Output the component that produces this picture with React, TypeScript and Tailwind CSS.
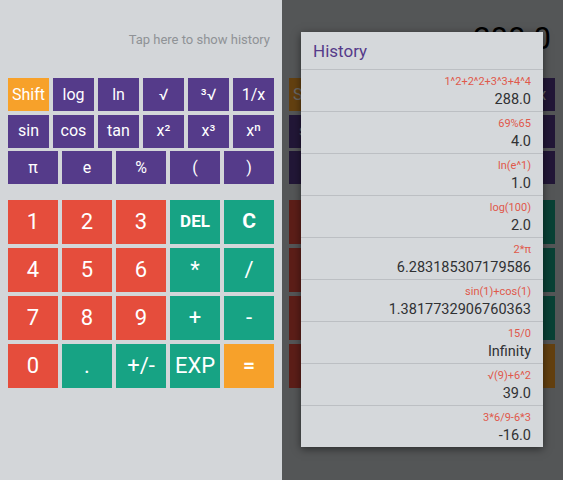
import React from "react";

const sciRow1 = ["Shift", "log", "ln", "√", "³√", "1/x"];
const sciRow2 = ["sin", "cos", "tan", "x²", "x³", "xⁿ"];
const sciRow3 = ["π", "e", "%", "(", ")"];

type K = { l: string; c: "r" | "g" | "o"; b?: "del" | "c" | "eq" };
const numKeys: K[] = [
  { l: "1", c: "r" }, { l: "2", c: "r" }, { l: "3", c: "r" }, { l: "DEL", c: "g", b: "del" }, { l: "C", c: "g", b: "c" },
  { l: "4", c: "r" }, { l: "5", c: "r" }, { l: "6", c: "r" }, { l: "*", c: "g" }, { l: "/", c: "g" },
  { l: "7", c: "r" }, { l: "8", c: "r" }, { l: "9", c: "r" }, { l: "+", c: "g" }, { l: "-", c: "g" },
  { l: "0", c: "r" }, { l: ".", c: "g" }, { l: "+/-", c: "g" }, { l: "EXP", c: "g" }, { l: "=", c: "o", b: "eq" },
];

const history = [
  ["1^2+2^2+3^3+4^4", "288.0"],
  ["69%65", "4.0"],
  ["ln(e^1)", "1.0"],
  ["log(100)", "2.0"],
  ["2*π", "6.283185307179586"],
  ["sin(1)+cos(1)", "1.3817732906760363"],
  ["15/0", "Infinity"],
  ["√(9)+6^2", "39.0"],
  ["3*6/9-6*3", "-16.0"],
];

function Calc({ display }: { display?: string }) {
  return (
    <div className="flex flex-col h-full">
      {display ? (
        <div className="h-[78px] flex justify-end pr-[4px] pt-[20px]">
          <span className="text-[31px] leading-[38px] text-black">{display}</span>
        </div>
      ) : (
        <div className="h-[78px] flex justify-end pr-[4px] pt-[31px]">
          <span className="text-[13px] leading-[18px] text-[#8f9296]">Tap here to show history</span>
        </div>
      )}
      <div className="flex flex-col gap-[3.5px]">
        <div className="grid grid-cols-6 gap-x-[4px]">
          {sciRow1.map((k) => (
            <div
              key={k}
              className={`h-[33px] flex items-center justify-center text-white text-[16px] ${k === "Shift" ? "bg-[#f7a12a]" : "bg-[#553b8a]"}`}
            >
              {k}
            </div>
          ))}
        </div>
        <div className="grid grid-cols-6 gap-x-[4px]">
          {sciRow2.map((k) => (
            <div key={k} className="h-[33px] flex items-center justify-center text-white text-[16px] bg-[#553b8a]">
              {k}
            </div>
          ))}
        </div>
        <div className="grid grid-cols-5 gap-x-[4px]">
          {sciRow3.map((k) => (
            <div key={k} className="h-[33px] flex items-center justify-center text-white text-[16px] bg-[#553b8a]">
              {k}
            </div>
          ))}
        </div>
      </div>
      <div className="grid grid-cols-5 gap-x-[4px] gap-y-[3.5px] mt-[15.5px]">
        {numKeys.map((k) => (
          <div
            key={k.l}
            className={`h-[44.5px] flex items-center justify-center text-white ${
              k.c === "r" ? "bg-[#e54d3c]" : k.c === "g" ? "bg-[#17a384]" : "bg-[#f7a12a]"
            } ${k.b === "del" ? "text-[17px] font-bold" : k.b === "c" || k.b === "eq" ? "text-[21px] font-bold" : "text-[22px]"}`}
          >
            {k.l}
          </div>
        ))}
      </div>
    </div>
  );
}

export default function App() {
  return (
    <div
      className="w-[563px] h-[480px] flex bg-[#d3d6d9] overflow-hidden"
      style={{ fontFamily: "Roboto, 'Noto Sans', sans-serif" }}
    >
      <div className="w-[282px] h-full pl-[8px] pr-[8px]">
        <Calc />
      </div>
      <div className="relative w-[281px] h-full pl-[7px] pr-[8px]">
        <Calc display="288.0" />
        <div className="absolute inset-0 bg-black/60" />
        <div className="absolute left-[19px] top-[32px] w-[242px] bg-[#d5d8db] shadow-[0_2px_8px_rgba(0,0,0,0.5)]">
          <div className="h-[37px] flex items-center pl-[12px]">
            <span className="text-[17px] text-[#553b8a] leading-[20px]">History</span>
          </div>
          {history.map(([e, r]) => (
            <div key={e} className="h-[42px] border-t border-[#bcbfc3] flex flex-col items-end pr-[12px] pt-[5px]">
              <span className="text-[11px] leading-[14px] text-[#e0594b]">{e}</span>
              <span className="text-[14.5px] leading-[18px] mt-[2px] text-[#303133]">{r}</span>
            </div>
          ))}
        </div>
      </div>
    </div>
  );
}
